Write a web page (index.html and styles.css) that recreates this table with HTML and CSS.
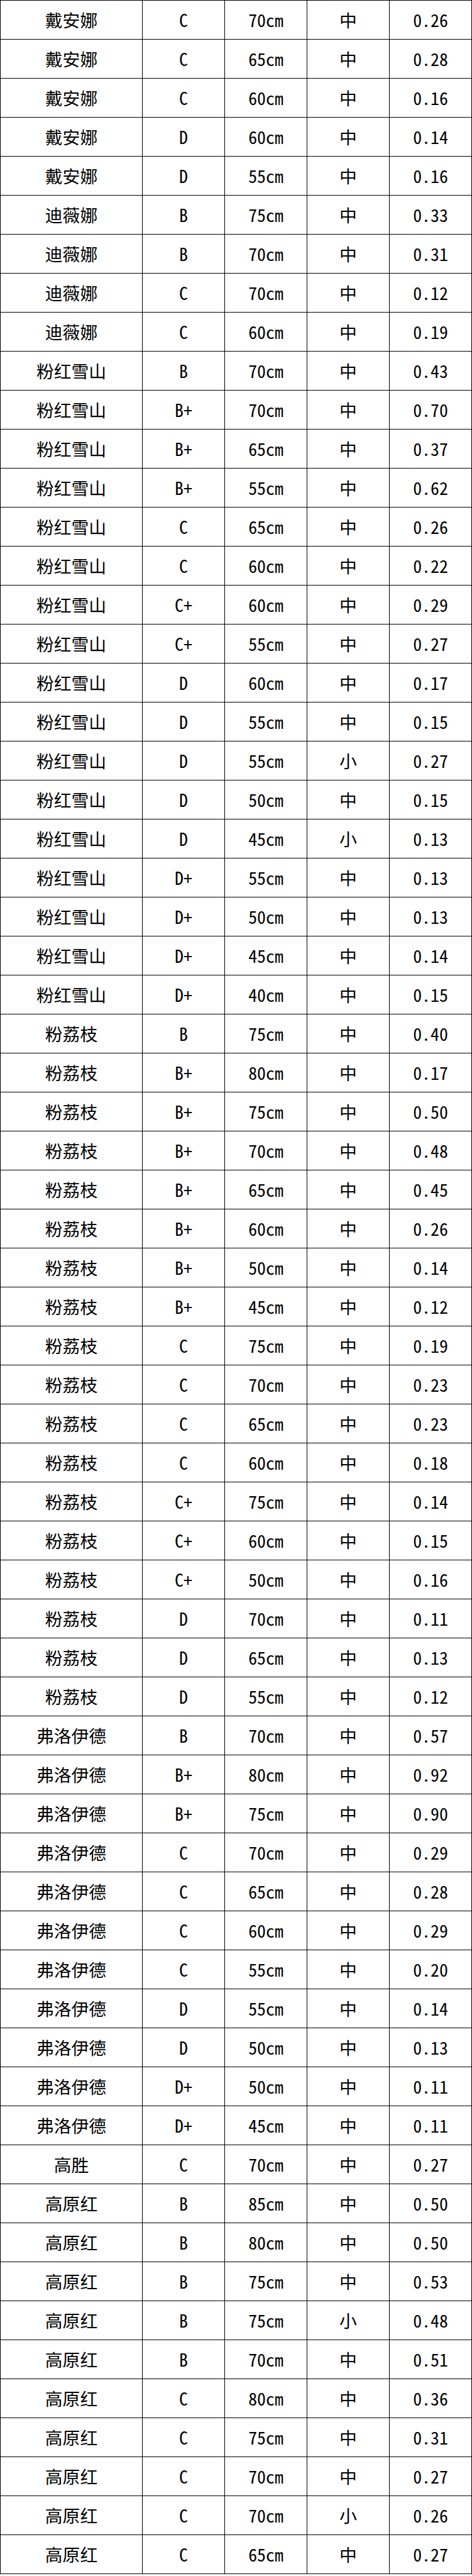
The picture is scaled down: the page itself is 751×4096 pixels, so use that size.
FILE: index.html
```html
<!DOCTYPE html>
<html lang="zh-CN">
<head>
<meta charset="utf-8">
<title>品种规格表</title>
<link rel="stylesheet" href="styles.css">
</head>
<body>
<table class="sheet">
<colgroup><col class="c-name"><col class="c-grade"><col class="c-len"><col class="c-size"><col class="c-price"></colgroup>
<tbody>
<tr><td>戴安娜</td><td>C</td><td>70cm</td><td>中</td><td>0.26</td></tr>
<tr><td>戴安娜</td><td>C</td><td>65cm</td><td>中</td><td>0.28</td></tr>
<tr><td>戴安娜</td><td>C</td><td>60cm</td><td>中</td><td>0.16</td></tr>
<tr><td>戴安娜</td><td>D</td><td>60cm</td><td>中</td><td>0.14</td></tr>
<tr><td>戴安娜</td><td>D</td><td>55cm</td><td>中</td><td>0.16</td></tr>
<tr><td>迪薇娜</td><td>B</td><td>75cm</td><td>中</td><td>0.33</td></tr>
<tr><td>迪薇娜</td><td>B</td><td>70cm</td><td>中</td><td>0.31</td></tr>
<tr><td>迪薇娜</td><td>C</td><td>70cm</td><td>中</td><td>0.12</td></tr>
<tr><td>迪薇娜</td><td>C</td><td>60cm</td><td>中</td><td>0.19</td></tr>
<tr><td>粉红雪山</td><td>B</td><td>70cm</td><td>中</td><td>0.43</td></tr>
<tr><td>粉红雪山</td><td>B+</td><td>70cm</td><td>中</td><td>0.70</td></tr>
<tr><td>粉红雪山</td><td>B+</td><td>65cm</td><td>中</td><td>0.37</td></tr>
<tr><td>粉红雪山</td><td>B+</td><td>55cm</td><td>中</td><td>0.62</td></tr>
<tr><td>粉红雪山</td><td>C</td><td>65cm</td><td>中</td><td>0.26</td></tr>
<tr><td>粉红雪山</td><td>C</td><td>60cm</td><td>中</td><td>0.22</td></tr>
<tr><td>粉红雪山</td><td>C+</td><td>60cm</td><td>中</td><td>0.29</td></tr>
<tr><td>粉红雪山</td><td>C+</td><td>55cm</td><td>中</td><td>0.27</td></tr>
<tr><td>粉红雪山</td><td>D</td><td>60cm</td><td>中</td><td>0.17</td></tr>
<tr><td>粉红雪山</td><td>D</td><td>55cm</td><td>中</td><td>0.15</td></tr>
<tr><td>粉红雪山</td><td>D</td><td>55cm</td><td>小</td><td>0.27</td></tr>
<tr><td>粉红雪山</td><td>D</td><td>50cm</td><td>中</td><td>0.15</td></tr>
<tr><td>粉红雪山</td><td>D</td><td>45cm</td><td>小</td><td>0.13</td></tr>
<tr><td>粉红雪山</td><td>D+</td><td>55cm</td><td>中</td><td>0.13</td></tr>
<tr><td>粉红雪山</td><td>D+</td><td>50cm</td><td>中</td><td>0.13</td></tr>
<tr><td>粉红雪山</td><td>D+</td><td>45cm</td><td>中</td><td>0.14</td></tr>
<tr><td>粉红雪山</td><td>D+</td><td>40cm</td><td>中</td><td>0.15</td></tr>
<tr><td>粉荔枝</td><td>B</td><td>75cm</td><td>中</td><td>0.40</td></tr>
<tr><td>粉荔枝</td><td>B+</td><td>80cm</td><td>中</td><td>0.17</td></tr>
<tr><td>粉荔枝</td><td>B+</td><td>75cm</td><td>中</td><td>0.50</td></tr>
<tr><td>粉荔枝</td><td>B+</td><td>70cm</td><td>中</td><td>0.48</td></tr>
<tr><td>粉荔枝</td><td>B+</td><td>65cm</td><td>中</td><td>0.45</td></tr>
<tr><td>粉荔枝</td><td>B+</td><td>60cm</td><td>中</td><td>0.26</td></tr>
<tr><td>粉荔枝</td><td>B+</td><td>50cm</td><td>中</td><td>0.14</td></tr>
<tr><td>粉荔枝</td><td>B+</td><td>45cm</td><td>中</td><td>0.12</td></tr>
<tr><td>粉荔枝</td><td>C</td><td>75cm</td><td>中</td><td>0.19</td></tr>
<tr><td>粉荔枝</td><td>C</td><td>70cm</td><td>中</td><td>0.23</td></tr>
<tr><td>粉荔枝</td><td>C</td><td>65cm</td><td>中</td><td>0.23</td></tr>
<tr><td>粉荔枝</td><td>C</td><td>60cm</td><td>中</td><td>0.18</td></tr>
<tr><td>粉荔枝</td><td>C+</td><td>75cm</td><td>中</td><td>0.14</td></tr>
<tr><td>粉荔枝</td><td>C+</td><td>60cm</td><td>中</td><td>0.15</td></tr>
<tr><td>粉荔枝</td><td>C+</td><td>50cm</td><td>中</td><td>0.16</td></tr>
<tr><td>粉荔枝</td><td>D</td><td>70cm</td><td>中</td><td>0.11</td></tr>
<tr><td>粉荔枝</td><td>D</td><td>65cm</td><td>中</td><td>0.13</td></tr>
<tr><td>粉荔枝</td><td>D</td><td>55cm</td><td>中</td><td>0.12</td></tr>
<tr><td>弗洛伊德</td><td>B</td><td>70cm</td><td>中</td><td>0.57</td></tr>
<tr><td>弗洛伊德</td><td>B+</td><td>80cm</td><td>中</td><td>0.92</td></tr>
<tr><td>弗洛伊德</td><td>B+</td><td>75cm</td><td>中</td><td>0.90</td></tr>
<tr><td>弗洛伊德</td><td>C</td><td>70cm</td><td>中</td><td>0.29</td></tr>
<tr><td>弗洛伊德</td><td>C</td><td>65cm</td><td>中</td><td>0.28</td></tr>
<tr><td>弗洛伊德</td><td>C</td><td>60cm</td><td>中</td><td>0.29</td></tr>
<tr><td>弗洛伊德</td><td>C</td><td>55cm</td><td>中</td><td>0.20</td></tr>
<tr><td>弗洛伊德</td><td>D</td><td>55cm</td><td>中</td><td>0.14</td></tr>
<tr><td>弗洛伊德</td><td>D</td><td>50cm</td><td>中</td><td>0.13</td></tr>
<tr><td>弗洛伊德</td><td>D+</td><td>50cm</td><td>中</td><td>0.11</td></tr>
<tr><td>弗洛伊德</td><td>D+</td><td>45cm</td><td>中</td><td>0.11</td></tr>
<tr><td>高胜</td><td>C</td><td>70cm</td><td>中</td><td>0.27</td></tr>
<tr><td>高原红</td><td>B</td><td>85cm</td><td>中</td><td>0.50</td></tr>
<tr><td>高原红</td><td>B</td><td>80cm</td><td>中</td><td>0.50</td></tr>
<tr><td>高原红</td><td>B</td><td>75cm</td><td>中</td><td>0.53</td></tr>
<tr><td>高原红</td><td>B</td><td>75cm</td><td>小</td><td>0.48</td></tr>
<tr><td>高原红</td><td>B</td><td>70cm</td><td>中</td><td>0.51</td></tr>
<tr><td>高原红</td><td>C</td><td>80cm</td><td>中</td><td>0.36</td></tr>
<tr><td>高原红</td><td>C</td><td>75cm</td><td>中</td><td>0.31</td></tr>
<tr><td>高原红</td><td>C</td><td>70cm</td><td>中</td><td>0.27</td></tr>
<tr><td>高原红</td><td>C</td><td>70cm</td><td>小</td><td>0.26</td></tr>
<tr><td>高原红</td><td>C</td><td>65cm</td><td>中</td><td>0.27</td></tr>
</tbody>
</table>
</body>
</html>
```

FILE: styles.css
```css
html, body {
  margin: 0;
  padding: 0;
  background: #ffffff;
}

.sheet {
  width: 750px;
  table-layout: fixed;
  border-collapse: collapse;
  font-family: "Noto Sans Mono CJK SC", "Noto Sans CJK SC", monospace;
  font-size: 27.8px;
  color: #000000;
}

.c-name { width: 226px; }
.c-grade, .c-len, .c-size, .c-price { width: 131px; }

.sheet tr {
  height: 62px;
}

.sheet td {
  border: 1px solid #000000;
  padding: 0;
  text-align: center;
  vertical-align: middle;
  line-height: 1;
  white-space: nowrap;
}
```
